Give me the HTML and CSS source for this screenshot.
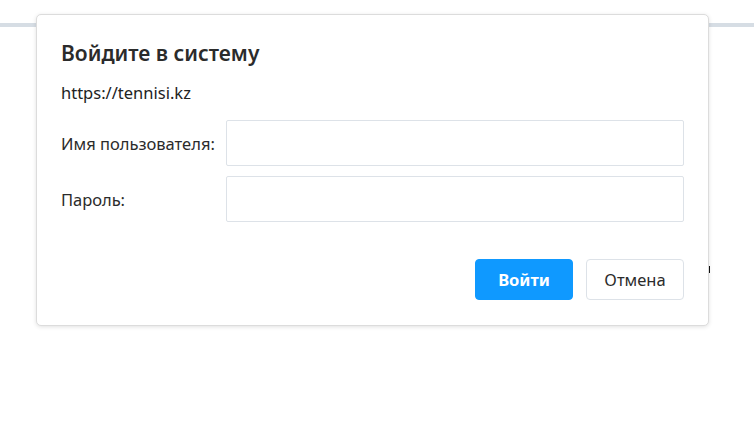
FILE: index.html
```html
<!DOCTYPE html>
<html>
<head>
    <meta charset="utf-8">
	<title>Вход</title>
	<link rel="stylesheet" href="styles.css">
</head>
<body>
	<div class="page">
		<div class="top-line"></div>
		<span class="caret"></span>
	</div>

	<div class="dialog">
		<h2>Войдите в систему</h2>
		<p class="origin">https://tennisi.kz</p>
		<form class="login">
			<label class="row">
				<span>Имя пользователя:</span>
				<input type="text">
			</label>
			<label class="row">
				<span>Пароль:</span>
				<input type="password">
			</label>
			<div class="actions">
				<button type="submit" class="btn btn-primary">Войти</button>
				<button type="button" class="btn">Отмена</button>
			</div>
		</form>
	</div>
</body>
</html>
```

FILE: styles.css
```css
body {
	font-family: "Noto Sans", "Open Sans", sans-serif;
	background-color: #fff;
	color: #333;
	margin: 0;
	padding: 0;
}

.page {
	position: relative;
	height: 441px;
}

.top-line {
	position: absolute;
	top: 23px;
	left: 0;
	right: 0;
	height: 4px;
	background-color: #d6dde4;
}

.caret {
	position: absolute;
	left: 709px;
	top: 266px;
	width: 1px;
	height: 7px;
	background-color: #111;
}

.dialog {
	position: absolute;
	top: 14px;
	left: 36px;
	width: 623px;
	padding: 22px 24px 25px 24px;
	background-color: #fff;
	border: 1px solid #dcdcdc;
	border-radius: 5px;
	box-shadow: 0 1px 4px rgba(0, 0, 0, 0.12);
}

.dialog h2 {
	margin: 0;
	font-size: 21px;
	line-height: 32px;
	font-weight: 600;
	color: #2b2b2b;
}

.origin {
	margin: 13px 0 0;
	font-size: 16.5px;
	line-height: 22px;
	color: #222;
}

.login {
	margin-top: 16px;
	display: flex;
	flex-direction: column;
	gap: 10px;
}

.row {
	display: flex;
	align-items: center;
}

.row span {
	width: 165px;
	flex: none;
	font-size: 16.5px;
	color: #2b2b2b;
}

.row input {
	flex: 1;
	height: 46px;
	box-sizing: border-box;
	border: 1px solid #dde2e8;
	border-radius: 2px;
	padding: 0 10px;
	font-size: 16px;
	font-family: inherit;
	outline: none;
}

.actions {
	display: flex;
	justify-content: flex-end;
	gap: 13px;
	margin-top: 27px;
}

.btn {
	width: 98px;
	height: 41px;
	border: 1px solid #dde2e8;
	border-radius: 4px;
	background-color: #fff;
	color: #2b2b2b;
	font-family: inherit;
	font-size: 16.5px;
	cursor: pointer;
}

.btn-primary {
	background-color: #0f99ff;
	border-color: #0f99ff;
	color: #fff;
	font-weight: 700;
}
```
